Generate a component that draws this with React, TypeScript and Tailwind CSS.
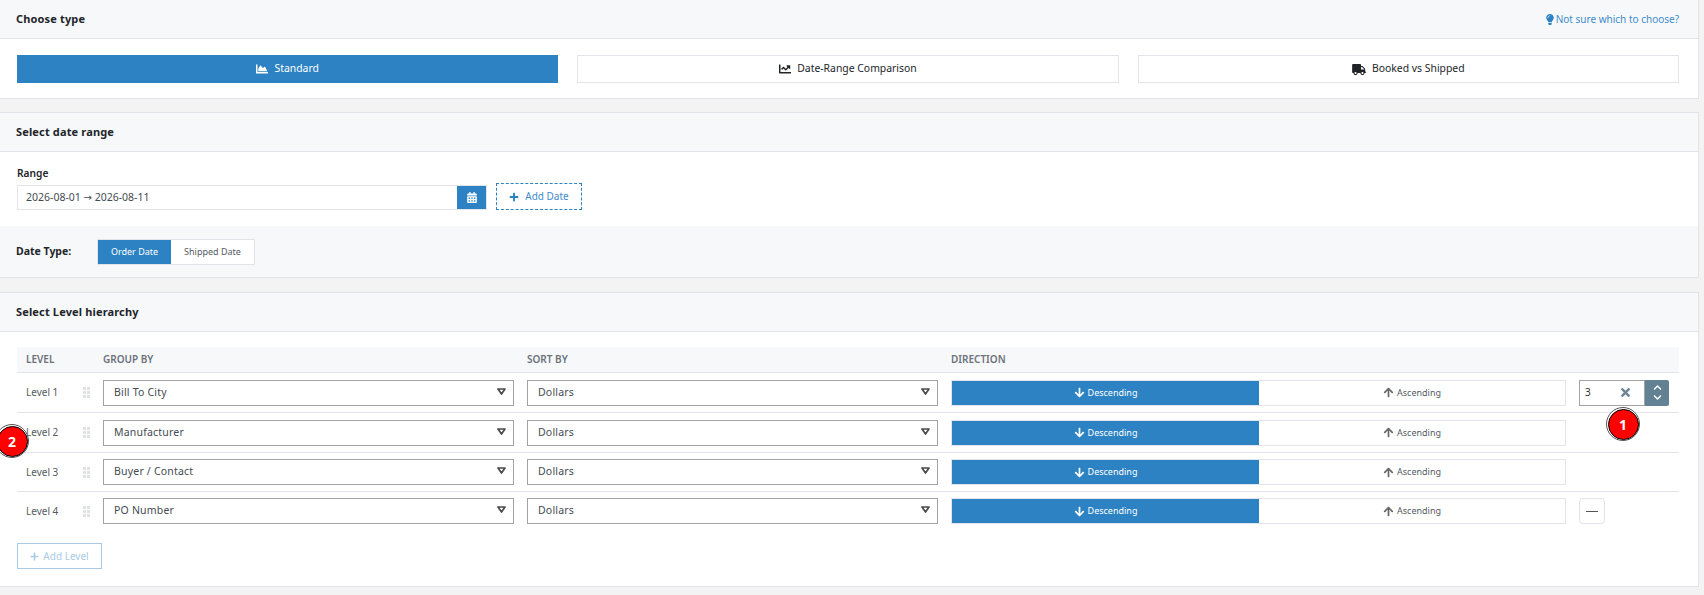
import { FaArrowDown, FaArrowUp, FaCalendarAlt, FaChartArea, FaChartLine, FaChevronDown, FaChevronUp, FaLightbulb, FaPlus, FaTimes, FaTruck } from "react-icons/fa"

const levels = [
  { name: "Level 1", group: "Bill To City", h: "h-[40px]" },
  { name: "Level 2", group: "Manufacturer", h: "h-[40px]" },
  { name: "Level 3", group: "Buyer / Contact", h: "h-[39px]" },
  { name: "Level 4", group: "PO Number", h: "h-[38px]" },
]

function CardHeader({ title, children }: { title: string; children?: React.ReactNode }) {
  return (
    <div className="flex h-[39px] items-center justify-between border-b border-[#e2e4e9] bg-[#f7f8fa] pl-[16px] pr-[19px]">
      <div className="text-[11px] font-bold tracking-[0.15px] text-[#212529]">{title}</div>
      {children}
    </div>
  )
}

function TypeButton({ active, icon, label }: { active?: boolean; icon: React.ReactNode; label: string }) {
  return (
    <button
      className={
        active
          ? "flex h-[28px] flex-1 items-center justify-center gap-[6px] border border-[#2c82c2] bg-[#2c82c2] text-[10.4px] text-white"
          : "flex h-[28px] flex-1 items-center justify-center gap-[6px] border border-[#e2e4e9] bg-white text-[10.4px] text-[#212529]"
      }
    >
      {icon}
      {label}
    </button>
  )
}

function SelectBox({ value }: { value: string }) {
  return (
    <div className="flex h-[26px] items-center justify-between border border-[#a3a3a3] bg-white pl-[10px] pr-[7px] text-[10.5px] tracking-[0.2px] text-[#444b52]">
      {value}
      <svg className="mb-[3px] h-[7px] w-[9px]" viewBox="0 0 9 7">
        <path d="M1 1h7L4.5 6z" fill="#fff" stroke="#4a4a4a" strokeWidth="1.7" strokeLinejoin="round" />
      </svg>
    </div>
  )
}

function GripDots() {
  return (
    <div className="grid w-[7px] grid-cols-2 gap-[1px]">
      {[0, 1, 2, 3, 4, 5].map((i) => (
        <div key={i} className="h-[3px] w-[3px] bg-[#dfe1e5]" />
      ))}
    </div>
  )
}

function Badge({ n, className }: { n: number; className: string }) {
  return (
    <div className={"absolute flex h-[34px] w-[34px] items-center justify-center rounded-full border border-[#555] bg-white " + className}>
      <div className="flex h-[31px] w-[31px] items-center justify-center rounded-full border border-black bg-[#fe0000] text-[14px] font-bold text-white">
        {n}
      </div>
    </div>
  )
}

export default function App() {
  return (
    <div className="relative h-[595px] overflow-hidden bg-[#f3f3f3] pr-[5px] font-['Noto_Sans','Open_Sans',sans-serif]">
      {/* Choose type */}
      <div className="border-b border-r border-[#e2e4e9] bg-white">
        <CardHeader title="Choose type">
          <a className="flex items-center gap-[2px] text-[10px] text-[#3f8ccb]">
            <FaLightbulb className="h-[11px] w-[8px] text-[#2c82c2]" />
            Not sure which to choose?
          </a>
        </CardHeader>
        <div className="flex gap-[19px] pb-[15px] pl-[17px] pr-[19px] pt-[16px]">
          <TypeButton active icon={<FaChartArea className="h-[12px] w-[12px]" />} label="Standard" />
          <TypeButton icon={<FaChartLine className="h-[12px] w-[12px]" />} label="Date-Range Comparison" />
          <TypeButton icon={<FaTruck className="h-[11px] w-[14px]" />} label="Booked vs Shipped" />
        </div>
      </div>

      {/* Select date range */}
      <div className="mt-[13px] border-y border-r border-[#e2e4e9] bg-white">
        <CardHeader title="Select date range" />
        <div className="pb-[16px] pl-[17px] pr-[19px] pt-[13px]">
          <div className="mb-[2px] text-[10.2px] font-semibold leading-[16px] text-[#212529]">Range</div>
          <div className="flex items-end gap-[9px]">
            <div className="flex h-[25px] w-[470px] items-center justify-between border border-[#e2e4e9] pl-[8px] text-[10.5px] text-[#444b52]">
              <span>
                2026-08-01 <span className="font-['DejaVu_Sans',sans-serif] text-[10px]">→</span> 2026-08-11
              </span>
              <div className="flex h-full w-[29px] items-center justify-center bg-[#2c82c2]">
                <FaCalendarAlt className="h-[11px] w-[10px] text-white" />
              </div>
            </div>
            <button className="flex h-[27px] w-[86px] items-center justify-center gap-[6px] border border-dashed border-[#2c82c2] text-[10px] text-[#3f8ccb]">
              <FaPlus className="h-[10px] w-[10px] text-[#2c82c2]" />
              Add Date
            </button>
          </div>
        </div>
        <div className="flex h-[51px] items-center bg-[#f7f8fa] pl-[16px]">
          <div className="w-[81px] text-[10.5px] font-bold text-[#212529]">Date Type:</div>
          <div className="flex h-[26px] border border-[#e2e4e9] text-[9px]">
            <div className="flex w-[73px] items-center justify-center bg-[#2c82c2] text-white">Order Date</div>
            <div className="flex w-[83px] items-center justify-center bg-white text-[#555b62]">Shipped Date</div>
          </div>
        </div>
      </div>

      {/* Select Level hierarchy */}
      <div className="mt-[14px] border-y border-r border-[#e2e4e9] bg-white">
        <CardHeader title="Select Level hierarchy" />
        <div className="pl-[17px] pr-[19px] pt-[15px]">
          <div className="grid h-[26px] grid-cols-[73px_411px_411px_615px_1fr] items-center gap-x-[13px] border-b border-[#e2e4e9] bg-[#f7f8fa] text-[10px] font-semibold text-[#6c727a]">
            <div className="pl-[9px]">LEVEL</div>
            <div>GROUP BY</div>
            <div>SORT BY</div>
            <div>DIRECTION</div>
          </div>
          {levels.map((level, i) => (
            <div
              key={level.name}
              className={
                i < 3
                  ? "grid grid-cols-[73px_411px_411px_615px_1fr] items-center gap-x-[13px] border-b border-[#e2e4e9] text-[10px] text-[#555b62] " + level.h
                  : "grid grid-cols-[73px_411px_411px_615px_1fr] items-center gap-x-[13px] text-[10px] text-[#555b62] " + level.h
              }
            >
              <div className="flex items-center justify-between pl-[9px]">
                {level.name}
                <GripDots />
              </div>
              <SelectBox value={level.group} />
              <SelectBox value="Dollars" />
              <div className="flex h-[26px] border border-[#e2e4e9] text-[9px]">
                <div className="flex w-[307px] items-center justify-center gap-[3px] bg-[#2c82c2] text-white">
                  <FaArrowDown className="h-[11px] w-[11px]" />
                  Descending
                </div>
                <div className="flex flex-1 items-center justify-center gap-[3px] bg-white text-[#555b62]">
                  <FaArrowUp className="h-[11px] w-[11px] text-[#666]" />
                  Ascending
                </div>
              </div>
              {i === 0 && (
                <div className="flex h-[26px] w-[90px]">
                  <div className="flex flex-1 items-center justify-between border border-[#a3a3a3] pl-[5px] pr-[13px] text-[#333]">
                    3
                    <FaTimes className="h-[13px] w-[11px] text-[#6c8494]" />
                  </div>
                  <div className="flex w-[24px] flex-col items-center justify-center gap-[1px] rounded-r-[2px] bg-[#628193] text-white">
                    <FaChevronUp className="h-[9px] w-[9px]" />
                    <FaChevronDown className="h-[9px] w-[9px]" />
                  </div>
                </div>
              )}
              {i === 3 && (
                <button className="flex h-[26px] w-[26px] items-center justify-center rounded-[4px] border border-[#e2e4e9] bg-white">
                  <div className="h-[1px] w-[12px] bg-[#555]" />
                </button>
              )}
            </div>
          ))}
          <button className="mb-[17px] mt-[13px] flex h-[26px] w-[85px] items-center justify-center gap-[4px] border border-[#a9cbe5] text-[10px] text-[#a9cbe5]">
            <FaPlus className="h-[9px] w-[9px]" />
            Add Level
          </button>
        </div>
      </div>

      <Badge n={1} className="left-[1606px] top-[407px]" />
      <Badge n={2} className="left-[-5px] top-[424px]" />
    </div>
  )
}
